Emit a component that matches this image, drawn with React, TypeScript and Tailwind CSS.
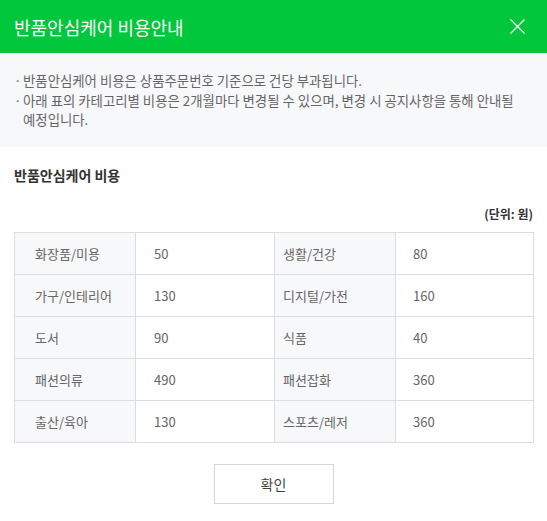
import React from "react";

const rows = [
  ["화장품/미용", "50", "생활/건강", "80"],
  ["가구/인테리어", "130", "디지털/가전", "160"],
  ["도서", "90", "식품", "40"],
  ["패션의류", "490", "패션잡화", "360"],
  ["출산/육아", "130", "스포츠/레저", "360"],
];

const App = () => {
  return (
    <div
      className="w-[547px] h-[521px] bg-white overflow-hidden"
      style={{ fontFamily: '"Noto Sans CJK KR", "Noto Sans", sans-serif' }}
    >
      <div className="h-[53px] bg-[#00c73c] flex items-center justify-between pl-[14px] pr-[22px]">
        <h1 className="text-[18px] text-white font-normal leading-none">반품안심케어 비용안내</h1>
        <button className="w-[15px] h-[15px]">
          <svg width="15" height="15" viewBox="0 0 15 15" fill="none">
            <path d="M0.5 0.5L14.5 14.5M14.5 0.5L0.5 14.5" stroke="white" strokeWidth="1.2" />
          </svg>
        </button>
      </div>

      <div className="h-[94px] bg-[#f7f8fa] pl-[14px] pr-[30px] pt-[18px] text-[13.4px] leading-[19.5px] text-[#666]">
        <div className="flex">
          <span className="w-[9px] shrink-0">·</span>
          <span>반품안심케어 비용은 상품주문번호 기준으로 건당 부과됩니다.</span>
        </div>
        <div className="flex">
          <span className="w-[9px] shrink-0">·</span>
          <span>아래 표의 카테고리별 비용은 2개월마다 변경될 수 있으며, 변경 시 공지사항을 통해 안내될 예정입니다.</span>
        </div>
      </div>

      <div className="px-[14px]">
        <h2 className="mt-[18px] text-[14px] font-bold text-[#333] leading-[20px]">반품안심케어 비용</h2>
        <p className="mt-[21px] text-right text-[12px] font-bold text-[#333] leading-[16px]">(단위: 원)</p>
        <table className="mt-[10px] w-[519px] border-collapse table-fixed text-[13px] text-[#666]">
          <colgroup>
            <col className="w-[121px]" />
            <col className="w-[139px]" />
            <col className="w-[121px]" />
            <col className="w-[138px]" />
          </colgroup>
          <tbody>
            {rows.map((r) => (
              <tr key={r[0]} className="h-[42px]">
                <th className="border border-[#dcdde2] bg-[#f7f8fa] font-normal text-left pl-[20px]">{r[0]}</th>
                <td className="border border-[#dcdde2] pl-[18px]">{r[1]}</td>
                <th className="border border-[#dcdde2] bg-[#f7f8fa] font-normal text-left pl-[8px]">{r[2]}</th>
                <td className="border border-[#dcdde2] pl-[17px]">{r[3]}</td>
              </tr>
            ))}
          </tbody>
        </table>
        <div className="flex justify-center mt-[21px]">
          <button className="w-[120px] h-[40px] border border-[#d5d7dc] bg-white text-[14px] text-[#444]">확인</button>
        </div>
      </div>
    </div>
  );
};

export default App;
